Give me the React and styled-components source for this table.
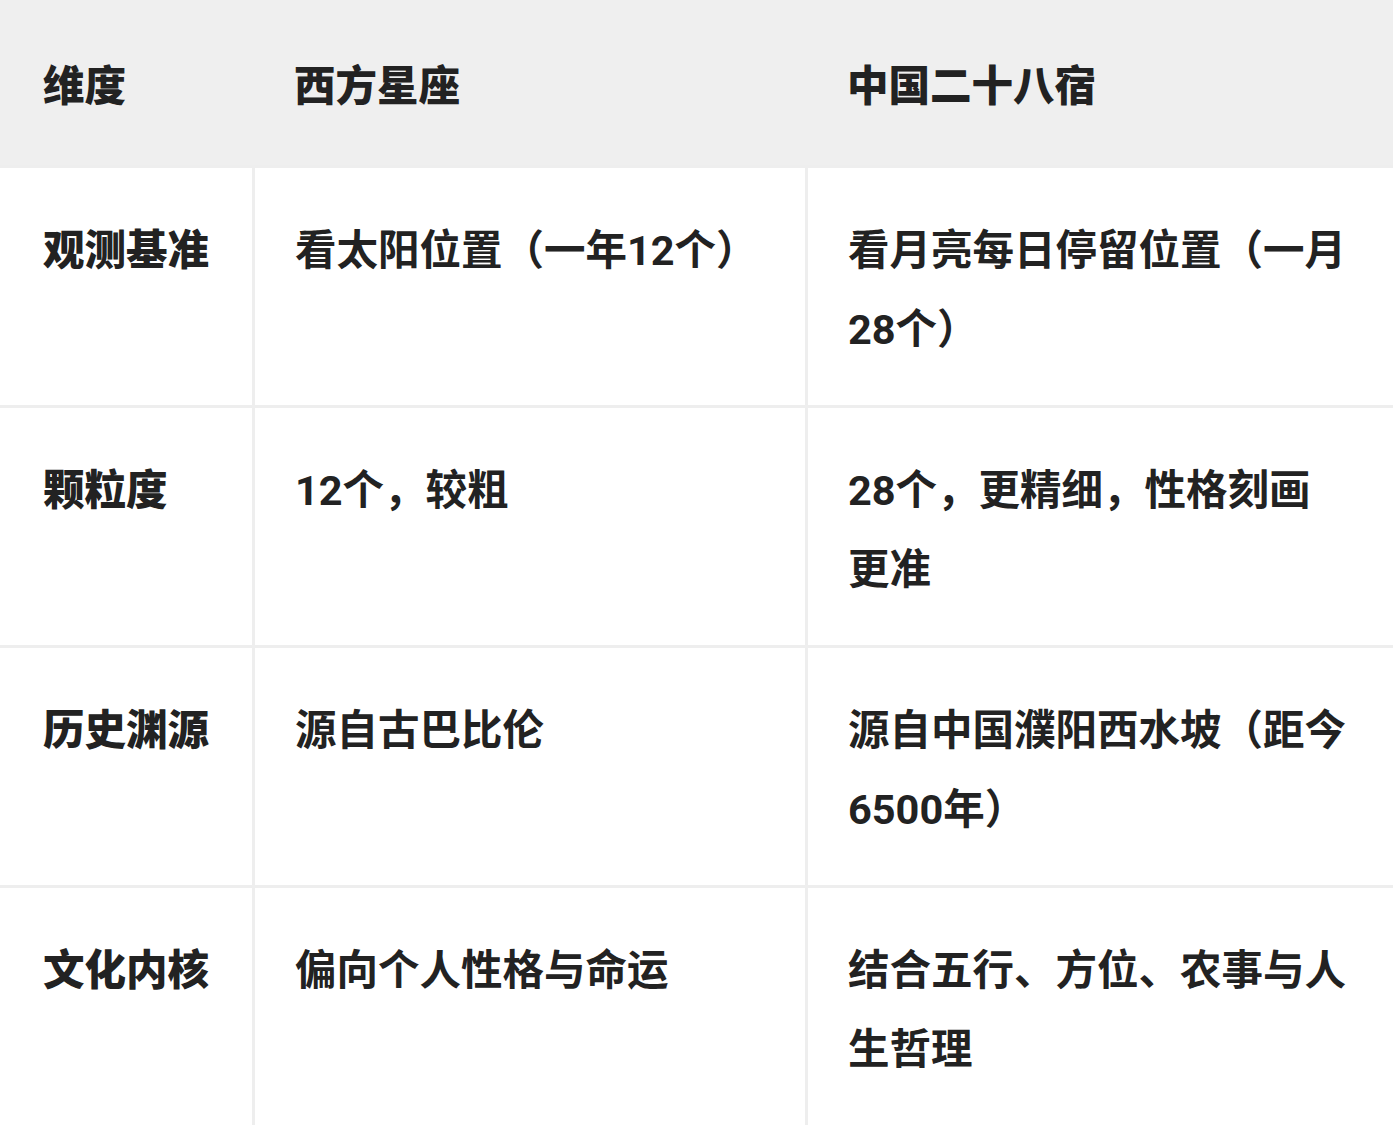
import React from 'react';
import styled, { createGlobalStyle } from 'styled-components';

const lineHeight = 79;
const borderColor = '#eeeeee';

const GlobalStyle = createGlobalStyle`
  html, body {
    margin: 0;
    padding: 0;
    background: #ffffff;
  }
  body {
    font-family: Roboto, "Noto Sans CJK SC", "Noto Sans", sans-serif;
    color: #222222;
  }
`;

const Table = styled.table`
  width: 100%;
  table-layout: fixed;
  border-collapse: separate;
  border-spacing: 0;
  font-size: 41.5px;
  line-height: ${lineHeight}px;
`;

const HeadRow = styled.tr`
  background-color: #efefef;
`;

const HeadCell = styled.th`
  text-align: left;
  vertical-align: top;
  font-weight: 900;
  padding: 47px 41px 39px ${(p) => (p.$first ? 43 : 42)}px;
`;

const Cell = styled.td`
  vertical-align: top;
  font-weight: ${(p) => (p.$label ? 900 : 700)};
  padding: 43px 41px 36px ${(p) => (p.$label ? 43 : 40)}px;
  border-top: 3px solid ${borderColor};
  border-left: ${(p) => (p.$label ? 'none' : `3px solid ${borderColor}`)};
`;

const rows = [
  ['观测基准', '看太阳位置（一年12个）', '看月亮每日停留位置（一月28个）'],
  ['颗粒度', '12个，较粗', '28个，更精细，性格刻画更准'],
  ['历史渊源', '源自古巴比伦', '源自中国濮阳西水坡（距今6500年）'],
  ['文化内核', '偏向个人性格与命运', '结合五行、方位、农事与人生哲理'],
];

export default function App() {
  return (
    <>
      <GlobalStyle />
      <Table>
        <colgroup>
          <col style={{ width: 252 }} />
          <col style={{ width: 553 }} />
          <col />
        </colgroup>
        <thead>
          <HeadRow>
            <HeadCell $first>维度</HeadCell>
            <HeadCell>西方星座</HeadCell>
            <HeadCell>中国二十八宿</HeadCell>
          </HeadRow>
        </thead>
        <tbody>
          {rows.map((r) => (
            <tr key={r[0]}>
              <Cell $label>{r[0]}</Cell>
              <Cell>{r[1]}</Cell>
              <Cell>{r[2]}</Cell>
            </tr>
          ))}
        </tbody>
      </Table>
    </>
  );
}
